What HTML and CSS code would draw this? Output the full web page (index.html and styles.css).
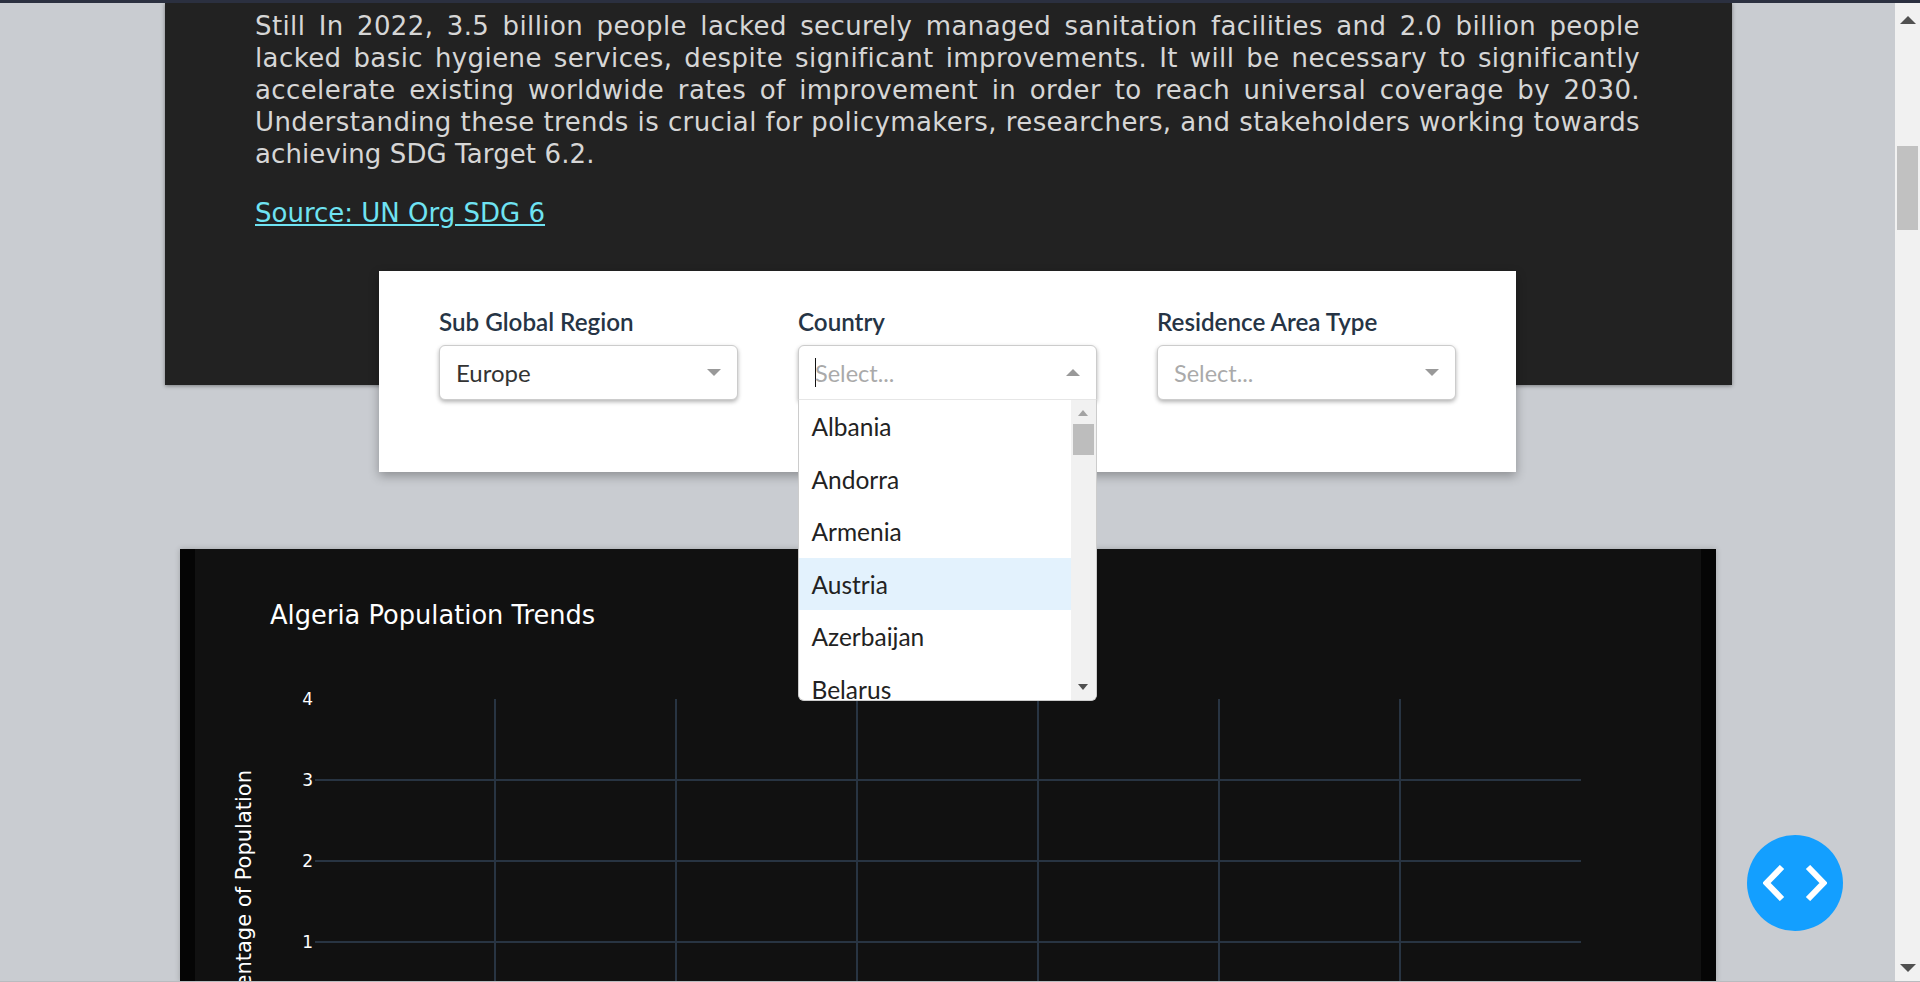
FILE: index.html
```html
<!DOCTYPE html>
<html lang="en">
<head>
  <meta charset="UTF-8" />
  <meta name="viewport" content="width=device-width, initial-scale=1.0"/>
  <title>Sanitation and Hygiene Trends</title>
  <link rel="stylesheet" href="styles.css">
</head>
<body>
  <div class="topbar"></div>
  <div class="frame">
    <main class="page">
      <section class="intro">
        <p>
          <span class="line">Still In 2022, 3.5 billion people lacked securely managed sanitation facilities and 2.0 billion people</span>
          <span class="line">lacked basic hygiene services, despite significant improvements. It will be necessary to significantly</span>
          <span class="line">accelerate existing worldwide rates of improvement in order to reach universal coverage by 2030.</span>
          <span class="line">Understanding these trends is crucial for policymakers, researchers, and stakeholders working towards</span>
          <span class="line last">achieving SDG Target 6.2.</span>
        </p>
        <a class="source" href="#">Source: UN Org SDG 6</a>
      </section>

      <section class="filters">
        <div class="filter">
          <label>Sub Global Region</label>
          <div class="select">
            <span class="value">Europe</span>
            <span class="arrow"></span>
          </div>
        </div>
        <div class="filter">
          <label>Country</label>
          <div class="select open">
            <span class="caret"></span>
            <span class="placeholder">Select...</span>
            <span class="arrow up"></span>
          </div>
          <div class="menu">
            <ul class="options">
              <li>Albania</li>
              <li>Andorra</li>
              <li>Armenia</li>
              <li class="focused">Austria</li>
              <li>Azerbaijan</li>
              <li>Belarus</li>
            </ul>
            <div class="menu-scroll">
              <span class="tri up small"></span>
              <span class="menu-thumb"></span>
              <span class="tri down small"></span>
            </div>
          </div>
        </div>
        <div class="filter">
          <label>Residence Area Type</label>
          <div class="select">
            <span class="placeholder">Select...</span>
            <span class="arrow"></span>
          </div>
        </div>
      </section>

      <section class="chart-card">
        <div class="chart-inner">
          <svg class="chart" width="1506" height="433" viewBox="0 0 1506 433">
            <g class="grid">
              <line x1="300" y1="150" x2="300" y2="433"/>
              <line x1="481" y1="150" x2="481" y2="433"/>
              <line x1="662" y1="150" x2="662" y2="433"/>
              <line x1="843" y1="150" x2="843" y2="433"/>
              <line x1="1024" y1="150" x2="1024" y2="433"/>
              <line x1="1205" y1="150" x2="1205" y2="433"/>
              <line x1="120" y1="231" x2="1386" y2="231"/>
              <line x1="120" y1="312" x2="1386" y2="312"/>
              <line x1="120" y1="393" x2="1386" y2="393"/>
            </g>
            <text class="chart-title" x="75" y="75">Algeria Population Trends</text>
            <g class="ticks">
              <text x="118" y="156">4</text>
              <text x="118" y="237">3</text>
              <text x="118" y="318">2</text>
              <text x="118" y="399">1</text>
            </g>
            <text class="axis-title" transform="translate(56 352) rotate(-90)">Percentage of Population</text>
          </svg>
        </div>
      </section>

      <button class="fab" type="button" aria-label="View source">
        <svg width="64" height="36" viewBox="0 0 64 36">
          <path d="M19 2 L3.5 18 L19 34" fill="none" stroke="#fff" stroke-width="6"/>
          <path d="M45 2 L60.5 18 L45 34" fill="none" stroke="#fff" stroke-width="6"/>
        </svg>
      </button>
    </main>

    <div class="scrollbar">
      <span class="tri up"></span>
      <span class="thumb"></span>
      <span class="tri down"></span>
    </div>
  </div>
  <div class="bottomline"></div>
</body>
</html>
```

FILE: styles.css
```css
body {
  margin: 0;
  height: 982px;
  overflow: hidden;
  background-color: #c9ccd1;
  font-family: "Lato", sans-serif;
}

.topbar {
  height: 3px;
  background-color: #2b3040;
}

.bottomline {
  height: 1px;
  background-color: #b9bbbf;
}

.frame {
  display: flex;
  height: 978px;
}

.page {
  position: relative;
  flex: 1;
  overflow: hidden;
}

.intro {
  box-sizing: border-box;
  width: 1567px;
  height: 382px;
  margin-left: 165px;
  padding: 7px 92px 0 90px;
  background-color: #222222;
  box-shadow: 0 1px 4px rgba(0,0,0,0.4);
  font-family: "DejaVu Sans", sans-serif;
  font-size: 26px;
  line-height: 32px;
  color: #d6d6d6;
}

.intro p {
  margin: 0 0 27px;
  letter-spacing: 0.4px;
}

.intro .line {
  display: block;
  text-align: justify;
  text-align-last: justify;
}

.intro .line.last {
  letter-spacing: 0.1px;
  text-align-last: left;
}

.source {
  color: #6fe3f2;
  text-decoration: underline;
}

.filters {
  position: relative;
  box-sizing: border-box;
  display: flex;
  gap: 60.5px;
  width: 1137px;
  height: 201px;
  margin: -114px 0 0 379px;
  padding: 35px 0 0 60px;
  background-color: white;
  box-shadow: 0 4px 10px rgba(0,0,0,0.3);
}

.filter {
  position: relative;
  width: 298.5px;
}

.filter label {
  display: block;
  height: 39px;
  font-weight: 600;
  font-size: 24.2px;
  line-height: 32px;
  color: #263445;
}

.select {
  box-sizing: border-box;
  display: flex;
  align-items: center;
  height: 55px;
  padding: 0 16px;
  border: 1px solid #cccccc;
  border-radius: 6px;
  background-color: white;
  box-shadow: 0 2px 4px rgba(0,0,0,0.3);
  font-size: 24px;
  color: #333333;
}

.select.open {
  border-bottom-left-radius: 0;
  border-bottom-right-radius: 0;
}

.placeholder {
  font-size: 23.5px;
  color: #aaaaaa;
}

.caret {
  width: 1px;
  height: 29px;
  margin-right: -1px;
  background-color: #111111;
}

.arrow {
  width: 0;
  height: 0;
  margin-left: auto;
  border-left: 7px solid transparent;
  border-right: 7px solid transparent;
  border-top: 7px solid #999999;
}

.arrow.up {
  border-top: 0;
  border-bottom: 7px solid #999999;
}

.menu {
  position: absolute;
  top: 93px;
  left: 0;
  z-index: 2;
  box-sizing: border-box;
  display: flex;
  width: 298.5px;
  height: 302px;
  overflow: hidden;
  border: 1px solid #cccccc;
  border-top-color: #e6e6e6;
  border-radius: 0 0 6px 6px;
  background-color: white;
}

.options {
  flex: 1;
  margin: 0;
  padding: 0;
  list-style: none;
  overflow: hidden;
  font-size: 24.5px;
  color: #222222;
}

.options li {
  box-sizing: border-box;
  height: 52.6px;
  padding-left: 12.5px;
  line-height: 54px;
}

.options li.focused {
  background-color: #e3f2fd;
}

.menu-scroll {
  display: flex;
  flex-direction: column;
  align-items: center;
  width: 25px;
  padding-top: 10px;
  background-color: #f1f1f1;
}

.menu-thumb {
  width: 21px;
  height: 31px;
  margin-top: 8px;
  background-color: #bdbdbd;
}

.tri {
  width: 0;
  height: 0;
  border-left: 8px solid transparent;
  border-right: 8px solid transparent;
}

.tri.up {
  border-bottom: 8px solid #505050;
}

.tri.down {
  margin-top: auto;
  border-top: 8px solid #505050;
}

.tri.small {
  border-left-width: 5px;
  border-right-width: 5px;
}

.tri.small.up {
  border-bottom: 6px solid #a3a3a3;
}

.tri.small.down {
  margin-bottom: 10px;
  border-top: 6px solid #505050;
}

.chart-card {
  box-sizing: border-box;
  width: 1536px;
  height: 433px;
  margin: 77px 0 0 180px;
  padding: 0 15px;
  background-color: #050505;
  box-shadow: 0 0 6px rgba(0,0,0,0.2);
}

.chart-inner {
  height: 100%;
  background-color: #111111;
}

.chart {
  display: block;
}

.grid line {
  stroke: #283442;
  stroke-width: 2;
}

.chart text {
  font-family: "DejaVu Sans", sans-serif;
  fill: white;
}

.chart .chart-title {
  font-size: 25.7px;
}

.chart .ticks text {
  font-size: 17px;
  text-anchor: end;
}

.chart .axis-title {
  font-size: 21px;
  text-anchor: middle;
}

.fab {
  position: absolute;
  left: 1747px;
  top: 832px;
  display: flex;
  align-items: center;
  justify-content: center;
  width: 96px;
  height: 96px;
  padding: 0;
  border: none;
  border-radius: 50%;
  background-color: #139fff;
}

.scrollbar {
  display: flex;
  flex-direction: column;
  align-items: center;
  width: 25px;
  padding-top: 13px;
  background-color: #f1f1f1;
}

.thumb {
  width: 21px;
  height: 84px;
  margin-top: 122px;
  background-color: #c1c1c1;
}

.scrollbar .tri.down {
  margin-bottom: 9px;
}
```
